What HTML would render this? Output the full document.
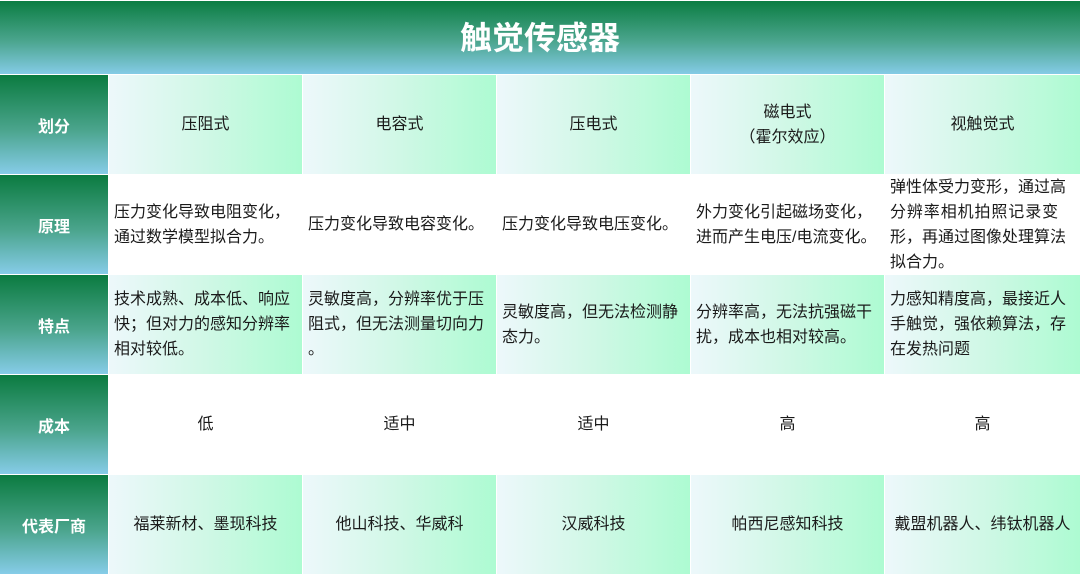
<!DOCTYPE html>
<html><head><meta charset="utf-8"><style>
*{margin:0;padding:0;box-sizing:border-box}
body{width:1080px;height:574px;overflow:hidden;background:#fff;font-family:"Liberation Sans","Noto Sans CJK SC",sans-serif;position:relative}
.title{position:absolute;left:0;top:1px;width:1080px;height:73px;background:linear-gradient(#0b7d42,#4ba58e 55%,#84cbe6);color:#fff;font-weight:bold;font-size:32px;text-align:center;line-height:74px}
.h{position:absolute;left:0;width:108px;height:99px;background:linear-gradient(#0b7b40,#4aa48c 55%,#86cce8);color:#fff;font-weight:bold;font-size:16px;display:flex;align-items:center;justify-content:center}
.c{position:absolute;height:99px;display:flex;align-items:center;font-size:16px;color:#1a1a1a;line-height:25px;white-space:nowrap;overflow:hidden}
.g{background:linear-gradient(90deg,#edf8fb,#d0f8e6 50%,#adfbd2)}
.ctr{justify-content:center;text-align:center}
.l{padding-left:5px}
.w{letter-spacing:0.9px}
</style></head><body>
<div class="title">触觉传感器</div>

<div class="h" style="top:75px">划分</div>
<div class="h" style="top:175px">原理</div>
<div class="h" style="top:275px">特点</div>
<div class="h" style="top:375px">成本</div>
<div class="h" style="top:475px">代表厂商</div>

<div class="c g ctr" style="top:75px;left:109px;width:193px"><div>压阻式</div></div>
<div class="c g ctr" style="top:75px;left:303px;width:193px"><div>电容式</div></div>
<div class="c g ctr" style="top:75px;left:497px;width:193px"><div>压电式</div></div>
<div class="c g ctr" style="top:75px;left:691px;width:193px"><div>磁电式<br>（霍尔效应）</div></div>
<div class="c g ctr" style="top:75px;left:885px;width:195px"><div>视触觉式</div></div>

<div class="c l" style="top:175px;left:109px;width:193px"><div>压力变化导致电阻变化，<br>通过数学模型拟合力。</div></div>
<div class="c l" style="top:175px;left:303px;width:193px"><div>压力变化导致电容变化。</div></div>
<div class="c l" style="top:175px;left:497px;width:193px"><div>压力变化导致电压变化。</div></div>
<div class="c l" style="top:175px;left:691px;width:193px"><div>外力变化引起磁场变化，<br>进而产生电压/电流变化。</div></div>
<div class="c l" style="top:175px;left:885px;width:195px"><div>弹性体受力变形，通过高<br><span class="w">分辨率相机拍照记录变</span><br>形，再通过图像处理算法<br>拟合力。</div></div>

<div class="c g l" style="top:275px;left:109px;width:193px"><div>技术成熟、成本低、响应<br>快；但对力的感知分辨率<br>相对较低。</div></div>
<div class="c g l" style="top:275px;left:303px;width:193px"><div>灵敏度高，分辨率优于压<br>阻式，但无法测量切向力<br>。</div></div>
<div class="c g l" style="top:275px;left:497px;width:193px"><div>灵敏度高，但无法检测静<br>态力。</div></div>
<div class="c g l" style="top:275px;left:691px;width:193px"><div>分辨率高，无法抗强磁干<br>扰，成本也相对较高。</div></div>
<div class="c g l" style="top:275px;left:885px;width:195px"><div>力感知精度高，最接近人<br>手触觉，强依赖算法，存<br>在发热问题</div></div>

<div class="c ctr" style="top:375px;left:109px;width:193px"><div>低</div></div>
<div class="c ctr" style="top:375px;left:303px;width:193px"><div>适中</div></div>
<div class="c ctr" style="top:375px;left:497px;width:193px"><div>适中</div></div>
<div class="c ctr" style="top:375px;left:691px;width:193px"><div>高</div></div>
<div class="c ctr" style="top:375px;left:885px;width:195px"><div>高</div></div>

<div class="c g ctr" style="top:475px;left:109px;width:193px"><div>福莱新材、墨现科技</div></div>
<div class="c g ctr" style="top:475px;left:303px;width:193px"><div>他山科技、华威科</div></div>
<div class="c g ctr" style="top:475px;left:497px;width:193px"><div>汉威科技</div></div>
<div class="c g ctr" style="top:475px;left:691px;width:193px"><div>帕西尼感知科技</div></div>
<div class="c g ctr" style="top:475px;left:885px;width:195px"><div>戴盟机器人、纬钛机器人</div></div>
</body></html>
